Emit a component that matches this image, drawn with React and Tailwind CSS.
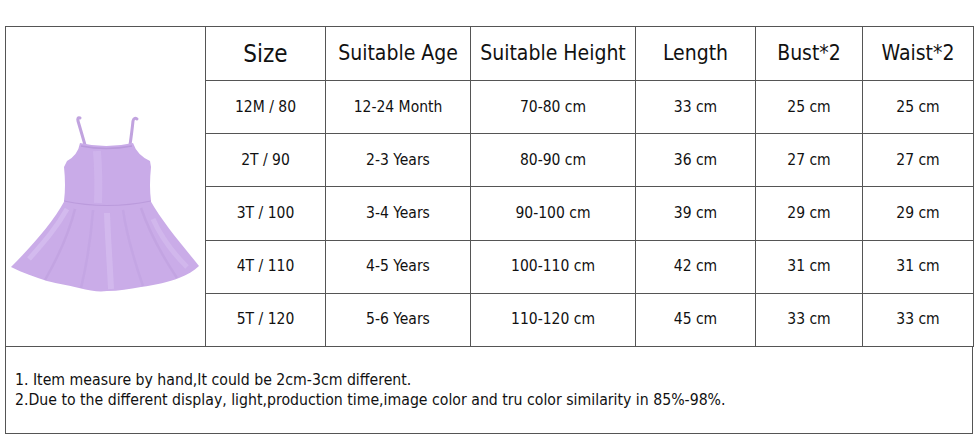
import React from 'react';

const headers = ['Suitable Age', 'Suitable Height', 'Length', 'Bust*2', 'Waist*2'];

const rows = [
    ['12M / 80', '12-24 Month', '70-80 cm', '33 cm', '25 cm', '25 cm'],
    ['2T / 90', '2-3 Years', '80-90 cm', '36 cm', '27 cm', '27 cm'],
    ['3T / 100', '3-4 Years', '90-100 cm', '39 cm', '29 cm', '29 cm'],
    ['4T / 110', '4-5 Years', '100-110 cm', '42 cm', '31 cm', '31 cm'],
    ['5T / 120', '5-6 Years', '110-120 cm', '45 cm', '33 cm', '33 cm'],
];

const font = { fontFamily: '"DejaVu Sans Condensed", "DejaVu Sans", sans-serif' };

// dessin de la robe, en coordonnées de la page
const Dress = () => (
    <svg width="200" height="319" viewBox="5 26 200 319">
        {/* bretelles */}
        <path d="M84 144 Q80 130 77 120 Q76 116 79 117" fill="none" stroke="#c1a3df" strokeWidth="3" strokeLinecap="round" />
        <path d="M129 144 Q131 130 132 120 Q133 116 136 118" fill="none" stroke="#c1a3df" strokeWidth="3" strokeLinecap="round" />
        {/* jupe */}
        <path
            d="M64 199 C52 222 28 248 10 266 C22 272 34 276 46 280 C58 283 66 284 78 287 C90 290 98 291 106 290 C118 290 128 288 140 286 C155 284 168 281 178 277 C186 274 193 270 198 265 C182 245 162 222 149 199 Z"
            fill="#caace8"
        />
        <path d="M74 208 C68 232 56 258 44 279" fill="none" stroke="#bb9bdc" strokeWidth="2.5" opacity="0.45" />
        <path d="M92 209 C90 236 86 262 80 287" fill="none" stroke="#bb9bdc" strokeWidth="2.5" opacity="0.35" />
        <path d="M122 209 C126 236 134 262 142 285" fill="none" stroke="#bb9bdc" strokeWidth="2.5" opacity="0.35" />
        <path d="M140 207 C148 230 162 256 176 277" fill="none" stroke="#bb9bdc" strokeWidth="2.5" opacity="0.45" />
        <path d="M28 258 C44 240 56 226 66 208" fill="none" stroke="#dcc7f3" strokeWidth="5" opacity="0.5" />
        <path d="M106 212 C107 240 109 265 110 288" fill="none" stroke="#dcc7f3" strokeWidth="6" opacity="0.45" />
        <path d="M152 218 C160 236 172 252 186 266" fill="none" stroke="#dcc7f3" strokeWidth="5" opacity="0.4" />
        {/* corsage */}
        <path
            d="M79 142 Q105 148 132 142 Q136 154 149 160 L150 166 Q148 185 150 200 Q106 209 63 200 Q65 185 63 166 L66 160 Q77 154 79 142 Z"
            fill="#c9abe8"
        />
        <path d="M96 150 Q98 175 97 202" fill="none" stroke="#d6bff1" strokeWidth="8" opacity="0.45" />
        <path d="M80 145 Q105 150 131 145" fill="none" stroke="#b999db" strokeWidth="1.5" />
        <path d="M63 200 Q106 209 150 200" fill="none" stroke="#bb9bdc" strokeWidth="1.2" />
    </svg>
);

const App = () => {
    return (
        <div className="w-[980px] h-[448px] bg-white text-[#111]" style={font}>
            <div className="ml-[5px] pt-[26px] w-[968px]">
                <table className="table-fixed border-collapse w-[968px]">
                    <colgroup>
                        <col className="w-[200px]" />
                        <col className="w-[120px]" />
                        <col className="w-[145px]" />
                        <col className="w-[165px]" />
                        <col className="w-[120px]" />
                        <col className="w-[107px]" />
                        <col className="w-[111px]" />
                    </colgroup>
                    <tbody>
                        <tr className="h-[54px]">
                            <td rowSpan={6} className="border border-[#555] p-0 align-middle">
                                <Dress />
                            </td>
                            <td className="border border-[#555] text-center text-[24px] p-0">Size</td>
                            {headers.map(h => (
                                <td key={h} className="border border-[#555] text-center text-[21px] p-0">{h}</td>
                            ))}
                        </tr>
                        {rows.map(r => (
                            <tr key={r[0]} className="h-[53px]">
                                {r.map((c, i) => (
                                    <td key={i} className="border border-[#555] text-center text-[15.5px] p-0">{c}</td>
                                ))}
                            </tr>
                        ))}
                    </tbody>
                </table>
                <div className="h-[87px] border-x border-b border-[#555] flex items-center pl-[9px]">
                    <div className="text-[15.7px] leading-[20px]">
                        <div>1. Item measure by hand,It could be 2cm-3cm different.</div>
                        <div>2.Due to the different display, light,production time,image color and tru color similarity in 85%-98%.</div>
                    </div>
                </div>
            </div>
        </div>
    );
};

export default App;
